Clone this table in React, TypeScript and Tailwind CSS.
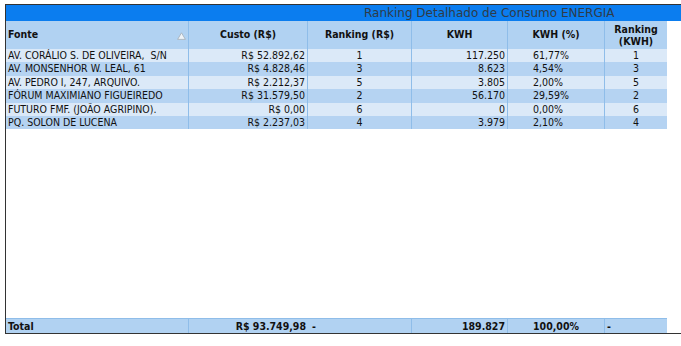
import React from 'react'

// Ranking detalhado de consumo - energia
const rows = [
  { fonte: 'AV. CORÁLIO S. DE OLIVEIRA,  S/N', custo: 'R$ 52.892,62', rankR: '1', kwh: '117.250', pct: '61,77%', rankK: '1' },
  { fonte: 'AV. MONSENHOR W. LEAL, 61', custo: 'R$ 4.828,46', rankR: '3', kwh: '8.623', pct: '4,54%', rankK: '3' },
  { fonte: 'AV. PEDRO I, 247, ARQUIVO.', custo: 'R$ 2.212,37', rankR: '5', kwh: '3.805', pct: '2,00%', rankK: '5' },
  { fonte: 'FÓRUM MAXIMIANO FIGUEIREDO', custo: 'R$ 31.579,50', rankR: '2', kwh: '56.170', pct: '29,59%', rankK: '2' },
  { fonte: 'FUTURO FMF. (JOÃO AGRIPINO).', custo: 'R$ 0,00', rankR: '6', kwh: '0', pct: '0,00%', rankK: '6' },
  { fonte: 'PQ. SOLON DE LUCENA', custo: 'R$ 2.237,03', rankR: '4', kwh: '3.979', pct: '2,10%', rankK: '4' },
]

const cols = 'grid grid-cols-[183px_119px_104px_96px_97px_62px] w-[661px]'
const cell = 'border-r border-[#8fbde9] whitespace-pre overflow-hidden'

export default function App() {
  return (
    <div className="w-[681px] h-[346px] bg-white overflow-hidden pt-1 pl-[5px] font-['DejaVu_Sans_Condensed','DejaVu_Sans',sans-serif] text-[10.5px] text-[#111]">
      <div className="w-[720px] h-[330px] border-l border-t border-b border-[#333] flex flex-col">
        {/* título */}
        <div className="h-[16px] bg-[#0b7def] pl-[358px] font-['DejaVu_Sans',sans-serif] text-[12px] leading-[16px] text-[#2f3b48]">
          Ranking Detalhado de Consumo ENERGIA
        </div>

        {/* cabeçalho */}
        <div className={`${cols} h-[28px] bg-[#b1d2f2] font-bold`}>
          <div className={`${cell} flex items-center justify-between pl-[2px] pr-[2px]`}>
            <span>Fonte</span>
            <svg width="9" height="8" viewBox="0 0 9 8" className="mt-[1px]">
              <path d="M4.5 0.8 L8.4 7.4 L0.6 7.4 Z" fill="#eef3f8" stroke="#a9b3bd" strokeWidth="0.9" />
            </svg>
          </div>
          <div className={`${cell} flex items-center justify-center`}>Custo (R$)</div>
          <div className={`${cell} flex items-center justify-center`}>Ranking (R$)</div>
          <div className={`${cell} flex items-center justify-center`}>KWH</div>
          <div className={`${cell} flex items-center justify-center`}>KWH (%)</div>
          <div className="flex items-center justify-center text-center leading-[12px]">
            Ranking
            <br />
            (KWH)
          </div>
        </div>

        {/* linhas */}
        {rows.map((r, i) => (
          <div
            key={i}
            className={`${cols} h-[13.4px] leading-[13px] ${i % 2 === 0 ? 'bg-[#dbe9f8]' : 'bg-[#b5d3f2]'}`}
          >
            <div className={`${cell} pl-[2px]`}>{r.fonte}</div>
            <div className={`${cell} text-right pr-[2px]`}>{r.custo}</div>
            <div className={`${cell} text-center`}>{r.rankR}</div>
            <div className={`${cell} text-right pr-[2px]`}>{r.kwh}</div>
            <div className={`${cell} pl-[25px]`}>{r.pct}</div>
            <div className="text-center">{r.rankK}</div>
          </div>
        ))}

        <div className="flex-1" />

        {/* total */}
        <div className={`${cols} h-[15px] leading-[14px] bg-[#b1d2f2] border-t border-[#8fbde9] font-bold`}>
          <div className={`${cell} pl-[2px]`}>Total</div>
          <div className="text-right pr-[2px]">R$ 93.749,98</div>
          <div className={`${cell} pl-[4px]`}>-</div>
          <div className={`${cell} text-right pr-[2px]`}>189.827</div>
          <div className={`${cell} pl-[25px]`}>100,00%</div>
          <div className="pl-[2px]">-</div>
        </div>
      </div>
    </div>
  )
}
